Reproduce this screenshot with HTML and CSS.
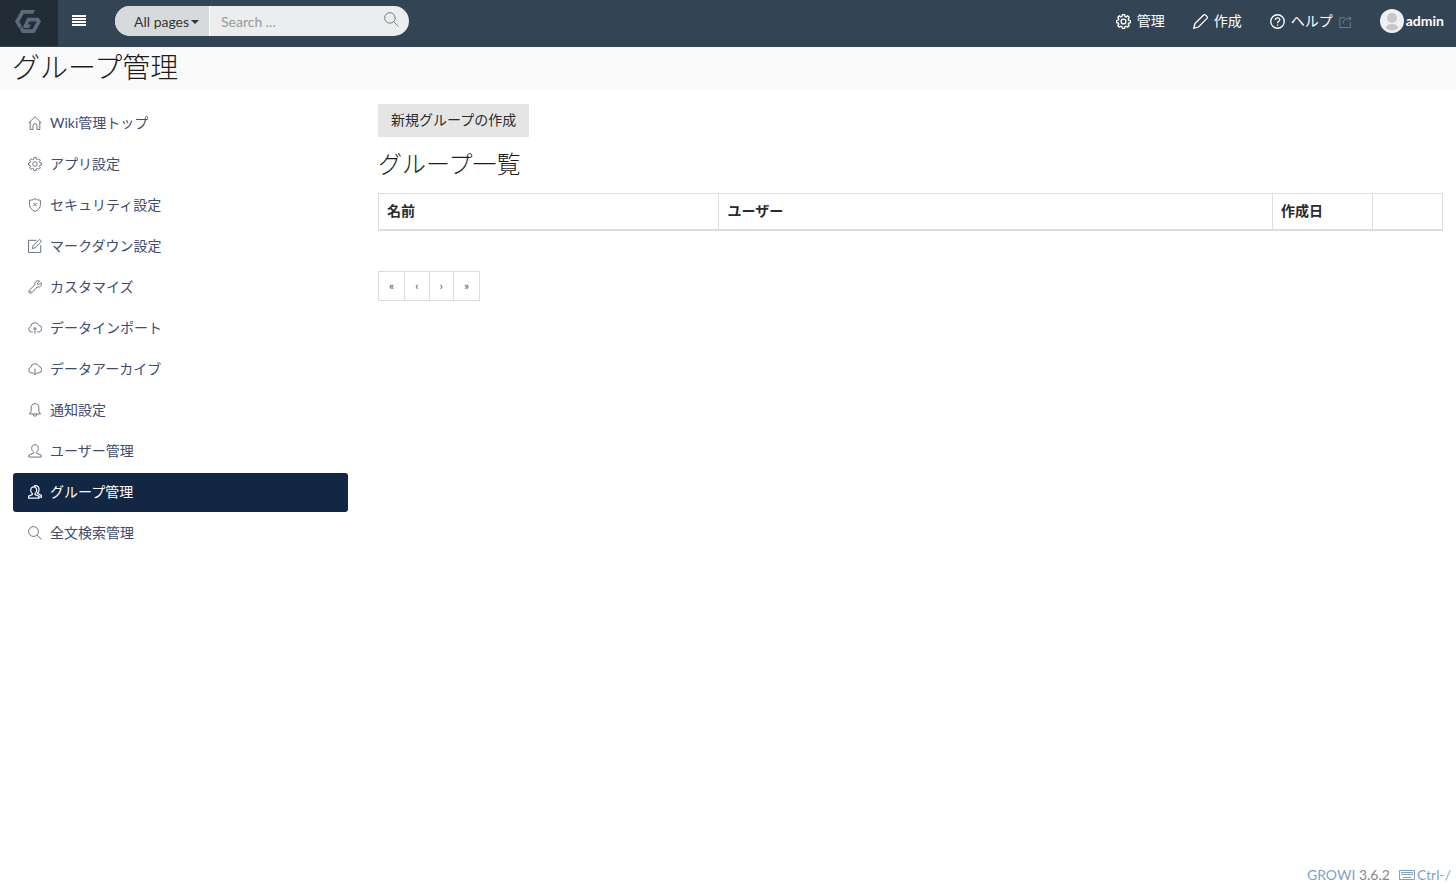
FILE: index.html
```html
<!DOCTYPE html>
<html lang="ja">
<head>
<meta charset="utf-8">
<meta name="viewport" content="width=device-width, initial-scale=1">
<title>グループ管理</title>
<link rel="stylesheet" href="styles.css">
</head>
<body>
<svg class="sprite" aria-hidden="true">
  <symbol id="gear" viewBox="0 0 16 16"><path d="M6.800 .6h2.400l.4 2 1.200.5 1.700-1.100 1.600 1.600-1.100 1.700.5 1.200 1.900.4v2.300l-1.900.4-.5 1.200 1.100 1.700-1.600 1.600-1.700-1.100-1.200.5-.4 1.900H6.800l-.4-1.900-1.200-.5-1.700 1.100-1.600-1.600L3 10.800l-.5-1.200-1.900-.4V6.900l1.900-.4L3 5.300 1.900 3.600 3.500 2l1.700 1.100 1.200-.5z"/><circle cx="8" cy="8" r="2.600"/></symbol>
  <symbol id="home" viewBox="0 0 16 16"><path d="M.6 8.200 8 .8l7.400 7.400M2.500 6.500v8.900h3.200V11a2.300 2.300 0 0 1 4.600 0v4.400h3.200V6.500"/></symbol>
  <symbol id="shield" viewBox="0 0 16 16"><path d="M8 .7c1.800 1.300 3.800 1.800 6.200 1.800v5c0 3.600-2.600 6.300-6.200 7.900-3.600-1.600-6.200-4.300-6.200-7.900v-5C4.200 2.500 6.200 2 8 .7zM6 5.500 10 9.500M10 5.500 6 9.500"/></symbol>
  <symbol id="note" viewBox="0 0 16 16"><path d="M9.500 1.500H.6v13.900h13.900V7M5 11l.8-3.300L12.700.8c.8-.7 3 1.400 2.300 2.300L8.200 10z"/></symbol>
  <symbol id="wrench" viewBox="0 0 16 16"><path d="M13.300 1.200 10.800 3.700l.3 1.300 1.300.3 2.500-2.500c1.500 3-1.200 6.200-4.400 5.200l-6.200 6.600c-1.900 1.800-4.700-.8-2.900-2.900L8 5.500C7 2.300 10.300-.3 13.300 1.200z"/><circle cx="2.900" cy="13.100" r=".5"/></symbol>
  <symbol id="cloud-up" viewBox="0 0 16 16"><path d="M5.500 12.500H3.700a3.200 3.200 0 0 1-.6-6.200A4.900 4.900 0 0 1 12.500 5a3.800 3.800 0 0 1 0 7.500h-2M8 14.500v-7M5.800 9.700 8 7.500l2.200 2.200"/></symbol>
  <symbol id="cloud-down" viewBox="0 0 16 16"><path d="M5.500 12.500H3.700a3.200 3.200 0 0 1-.6-6.200A4.900 4.900 0 0 1 12.500 5a3.800 3.800 0 0 1 0 7.500h-2M8 7.500v7M5.800 12.300 8 14.500l2.200-2.200"/></symbol>
  <symbol id="bell" viewBox="0 0 16 16"><path d="M8 .7c-3 0-4.400 2.200-4.400 5v4.200l-2 2.600h12.800l-2-2.600V5.700c0-2.800-1.400-5-4.400-5zM6 12.700a2 2.500 0 0 0 4 0"/></symbol>
  <symbol id="user" viewBox="0 0 16 16"><path d="M8 .8C5.500.8 4.200 2.600 4.200 5c0 1.900.8 3.400 2 4.300v1.200L.9 12.700v2.200h14.200v-2.200l-5.300-2.200V9.300c1.200-.9 2-2.400 2-4.300C11.800 2.600 10.500.8 8 .8z"/></symbol>
  <symbol id="users" viewBox="0 0 16 16"><path d="M6.500 2.200C4.300 2.200 3.100 3.800 3.100 6c0 1.700.7 3 1.800 3.800v1.100L.6 12.800V15h11.800v-2.200l-4.300-1.900V9.800C9.200 9 9.900 7.700 9.900 6c0-2.200-1.200-3.800-3.400-3.800zM6.800 1.100c3.300-1.200 6 .5 5.800 3.900 0 1.700-.6 3-1.500 3.800v1l4.300 2v2h-2.300"/></symbol>
  <symbol id="search" viewBox="0 0 16 16"><circle cx="6.300" cy="6.300" r="5.600"/><path d="m10.400 10.400 5 5"/></symbol>
  <symbol id="pencil" viewBox="0 0 16 16"><path d="m.8 15.200 1.300-4.900L11.300 1c1.400-1.300 5.100 2.200 3.700 3.700l-9.200 9.200z"/></symbol>
  <symbol id="help" viewBox="0 0 16 16"><circle cx="8" cy="8" r="7.200"/><path d="M5.700 6.400c0-3.200 4.700-3 4.700-.2 0 1.700-2.300 1.600-2.300 3.600M8.100 11.100v1.300"/></symbol>
  <symbol id="share" viewBox="0 0 16 16"><path d="M8 3.500H1v11.900h13V9M5 10.500C5 6 8.500 4.200 14.500 4.200M11.500 1l3.500 3.200-3.500 3.200"/></symbol>
  <symbol id="keyboard" viewBox="0 0 16 10"><path d="M.5.5h15v9H.5zM2 2.500h12M2 4.500h12M4 7.500h8"/></symbol>
</svg>

<header class="navbar">
  <a class="brand" href="#" aria-label="GROWI">
    <svg class="brand-logo" viewBox="0 0 26 23" aria-hidden="true">
      <path d="M6.500 0h13.600l-2.200 3.800H8.700L4.300 11.500l2.300 3.900-2.100 3.700L0 11.500z"/>
      <path d="M12.300 7.700h11.300l2.400 3.800L19.500 23H7l-2-3.600 1.900-3.300 1.800 3.100h8.700l4.300-7.700h-7.300l-1.700 3.100h3.300l-1.900 3.300H8.900l-.7-1.500z"/>
    </svg>
  </a>
  <button class="menu-toggle" type="button" aria-label="メニュー"><span></span><span></span><span></span><span></span></button>
  <form class="search" role="search">
    <button class="search-scope" type="button" aria-haspopup="true">All pages<span class="caret"></span></button>
    <input class="search-input" type="text" placeholder="Search ..." aria-label="Search">
    <button class="search-submit" type="button" aria-label="検索"><svg class="icon icon-nav"><use href="#search"/></svg></button>
  </form>
  <nav class="nav-links">
    <a href="#"><svg class="icon icon-nav"><use href="#gear"/></svg>管理</a>
    <a href="#"><svg class="icon icon-nav"><use href="#pencil"/></svg>作成</a>
    <a href="#"><svg class="icon icon-nav"><use href="#help"/></svg>ヘルプ<svg class="icon icon-external"><use href="#share"/></svg></a>
    <a class="account" href="#"><svg class="avatar" viewBox="0 0 24 24" aria-hidden="true"><circle class="avatar-bg" cx="12" cy="12" r="12"/><circle cx="12" cy="9" r="5"/><ellipse cx="12" cy="18.200" rx="6" ry="3.200"/></svg>admin</a>
  </nav>
</header>

<div class="title-bar"><h1>グループ管理</h1></div>

<div class="content">
  <nav class="side-nav">
    <a href="#"><svg class="icon"><use href="#home"/></svg>Wiki管理トップ</a>
    <a href="#"><svg class="icon"><use href="#gear"/></svg>アプリ設定</a>
    <a href="#"><svg class="icon"><use href="#shield"/></svg>セキュリティ設定</a>
    <a href="#"><svg class="icon"><use href="#note"/></svg>マークダウン設定</a>
    <a href="#"><svg class="icon"><use href="#wrench"/></svg>カスタマイズ</a>
    <a href="#"><svg class="icon"><use href="#cloud-up"/></svg>データインポート</a>
    <a href="#"><svg class="icon"><use href="#cloud-down"/></svg>データアーカイブ</a>
    <a href="#"><svg class="icon"><use href="#bell"/></svg>通知設定</a>
    <a href="#"><svg class="icon"><use href="#user"/></svg>ユーザー管理</a>
    <a class="active" href="#" aria-current="page"><svg class="icon"><use href="#users"/></svg>グループ管理</a>
    <a href="#"><svg class="icon"><use href="#search"/></svg>全文検索管理</a>
  </nav>

  <main class="main">
    <button class="create" type="button">新規グループの作成</button>
    <h2>グループ一覧</h2>
    <table class="groups">
      <colgroup><col class="col-name"><col><col class="col-date"><col class="col-menu"></colgroup>
      <thead><tr><th scope="col">名前</th><th scope="col">ユーザー</th><th scope="col">作成日</th><th></th></tr></thead>
    </table>
    <nav class="pagination" aria-label="ページ">
      <a href="#">«</a><a href="#">‹</a><a href="#">›</a><a href="#">»</a>
    </nav>
  </main>
</div>

<footer class="footer">
  <span><a href="#">GROWI</a> 3.6.2</span>
  <a class="shortcut" href="#"><svg class="icon icon-keyboard"><use href="#keyboard"/></svg>Ctrl-/</a>
</footer>
</body>
</html>
```
FILE: styles.css
```css
* {
  box-sizing: border-box;
}

body {
  display: flex;
  flex-direction: column;
  min-height: 100vh;
  margin: 0;
  background: #fff;
  color: #2b2b2b;
  font: 400 14px/20px Lato, "Noto Sans CJK JP", sans-serif;
}

a {
  color: inherit;
  text-decoration: none;
}

button,
input {
  margin: 0;
  padding: 0;
  border: 0;
  background: none;
  color: inherit;
  font: inherit;
}

.sprite {
  position: absolute;
  width: 0;
  height: 0;
}

.icon {
  flex: none;
  width: 14px;
  height: 14px;
  fill: none;
  stroke: currentColor;
  stroke-width: 1;
}

.navbar {
  display: flex;
  align-items: center;
  height: 47px;
  padding-right: 12px;
  background: #334455;
  color: #fff;
}

.brand {
  display: flex;
  align-self: stretch;
  align-items: center;
  width: 58px;
  margin-bottom: 1px;
  padding: 0 15px 4px;
  background: #222c36;
}

.brand-logo {
  width: 26px;
  height: 23px;
  fill: #5c6b7c;
}

.menu-toggle {
  display: grid;
  gap: 1px;
  width: 14px;
  margin: 0 29px 6px 14px;
}

.menu-toggle span {
  height: 2px;
  background: #fff;
}

.search {
  display: flex;
  width: 294px;
  height: 30px;
  margin-bottom: 5px;
  overflow: hidden;
  border-radius: 15px;
  background: #ebedee;
  color: #333;
}

.search-scope {
  display: flex;
  flex: none;
  align-items: center;
  gap: 2px;
  width: 95px;
  padding: 2px 0 0 19px;
  border-right: 1px solid #fff;
  background: #d6dadd;
}

.caret {
  border: 4px solid transparent;
  border-top-color: currentColor;
  border-bottom: 0;
}

.search-input {
  flex: 1;
  min-width: 0;
  padding: 2px 0 0 11px;
}

.search-input::placeholder {
  color: #999;
  opacity: 1;
}

.search-submit {
  display: flex;
  padding: 6px 10px 0;
  color: #777;
}

.nav-links {
  display: flex;
  align-items: center;
  gap: 28px;
  margin-left: auto;
  padding-bottom: 5px;
}

.nav-links a {
  display: flex;
  align-items: center;
}

.icon-nav {
  width: 15px;
  height: 15px;
}

.nav-links .icon-nav {
  margin-right: 6px;
  stroke-width: 1.4;
}

.nav-links .icon-external {
  width: 13px;
  height: 13px;
  margin-left: 6px;
  color: #7c8793;
}

.nav-links .account {
  gap: 2px;
  font-weight: 700;
}

.avatar {
  width: 24px;
  height: 24px;
  fill: #c8c8c8;
}

.avatar-bg {
  fill: #eff0f5;
}

.title-bar {
  padding: 0 12px 2px;
  background: #fafafa;
}

h1,
h2 {
  margin: 0;
  color: #1c1c1c;
  font-weight: 300;
}

h1 {
  font-size: 28px;
  line-height: 40px;
}

.content {
  display: grid;
  flex: 1;
  grid-template-columns: repeat(4, 1fr);
  gap: 30px;
  padding: 15px 13px;
}

.side-nav {
  display: flex;
  flex-direction: column;
  gap: 2px;
}

.side-nav a {
  display: flex;
  align-items: center;
  gap: 8px;
  min-height: 39px;
  padding: 0 15px 2px;
  border-radius: 3px;
  color: #3d4c70;
}

.side-nav .icon {
  color: #5a6173;
}

.side-nav .active {
  background: #112744;
  color: #fff;
}

.side-nav .active .icon {
  color: #fff;
  stroke-width: 1.4;
}

.main {
  grid-column: 2 / -1;
}

.create {
  display: block;
  padding: 6px 13px 7px;
  background: #e5e5e5;
}

h2 {
  margin: 9px 0 11px;
  font-size: 24px;
  line-height: 36px;
}

.groups {
  width: 100%;
  border-collapse: collapse;
  table-layout: fixed;
}

.groups th {
  height: 36px;
  padding: 0 8px;
  border: 1px solid #ddd;
  border-bottom-width: 2px;
  font-weight: 700;
  text-align: left;
}

.col-name {
  width: 32%;
}

.col-date {
  width: 100px;
}

.col-menu {
  width: 70px;
}

.pagination {
  display: flex;
  width: max-content;
  margin-top: 40px;
  border: 1px solid #ddd;
  color: #555;
  font-size: 12px;
  line-height: 28px;
}

.pagination a {
  padding: 0 10px;
}

.pagination a + a {
  border-left: 1px solid #ddd;
}

.footer {
  display: flex;
  justify-content: flex-end;
  gap: 9px;
  padding-right: 5px;
  color: #888;
  line-height: 18px;
}

.footer a {
  color: #7f9fcb;
}

.shortcut {
  display: flex;
  align-items: center;
  gap: 2px;
}

.icon-keyboard {
  width: 16px;
  height: 10px;
}
```
